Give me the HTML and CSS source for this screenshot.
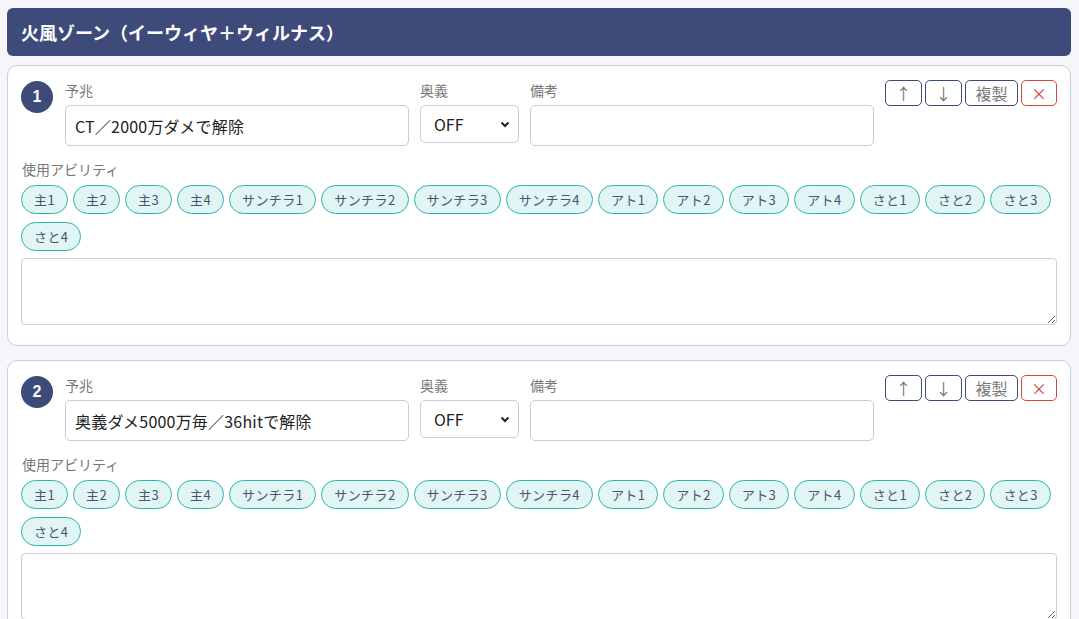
FILE: index.html
```html
<!DOCTYPE html>
<html lang="ja">
  <head>
    <meta charset="UTF-8" />
    <meta name="viewport" content="width=device-width, initial-scale=1.0" />
    <title>火風ゾーン</title>
    <link rel="stylesheet" href="styles.css">
  </head>
  <body>
    <!-- ゾーン見出し -->
    <header class="zone-head">
      <h2>火風ゾーン（イーウィヤ＋ウィルナス）</h2>
    </header>

    <!-- 予兆カード 1 -->
    <section class="omen-card">
      <div class="omen-top">
        <div class="omen-no">1</div>
        <div class="field field-text">
          <label>予兆</label>
          <input type="text" value="CT／2000万ダメで解除">
        </div>
        <div class="field field-select">
          <label>奥義</label>
          <select><option>OFF</option><option>ON</option></select>
        </div>
        <div class="field field-text">
          <label>備考</label>
          <input type="text" value="">
        </div>
        <div class="omen-btns">
          <button class="btn">↑</button>
          <button class="btn">↓</button>
          <button class="btn btn-copy">複製</button>
          <button class="btn btn-del">×</button>
        </div>
      </div>
      <div class="ability-label">使用アビリティ</div>
      <div class="chips">
        <span class="chip">主1</span>
        <span class="chip">主2</span>
        <span class="chip">主3</span>
        <span class="chip">主4</span>
        <span class="chip">サンチラ1</span>
        <span class="chip">サンチラ2</span>
        <span class="chip">サンチラ3</span>
        <span class="chip">サンチラ4</span>
        <span class="chip">アト1</span>
        <span class="chip">アト2</span>
        <span class="chip">アト3</span>
        <span class="chip">アト4</span>
        <span class="chip">さと1</span>
        <span class="chip">さと2</span>
        <span class="chip">さと3</span>
        <span class="chip">さと4</span>
      </div>
      <textarea class="memo"></textarea>
    </section>

    <!-- 予兆カード 2 -->
    <section class="omen-card">
      <div class="omen-top">
        <div class="omen-no">2</div>
        <div class="field field-text">
          <label>予兆</label>
          <input type="text" value="奥義ダメ5000万毎／36hitで解除">
        </div>
        <div class="field field-select">
          <label>奥義</label>
          <select><option>OFF</option><option>ON</option></select>
        </div>
        <div class="field field-text">
          <label>備考</label>
          <input type="text" value="">
        </div>
        <div class="omen-btns">
          <button class="btn">↑</button>
          <button class="btn">↓</button>
          <button class="btn btn-copy">複製</button>
          <button class="btn btn-del">×</button>
        </div>
      </div>
      <div class="ability-label">使用アビリティ</div>
      <div class="chips">
        <span class="chip">主1</span>
        <span class="chip">主2</span>
        <span class="chip">主3</span>
        <span class="chip">主4</span>
        <span class="chip">サンチラ1</span>
        <span class="chip">サンチラ2</span>
        <span class="chip">サンチラ3</span>
        <span class="chip">サンチラ4</span>
        <span class="chip">アト1</span>
        <span class="chip">アト2</span>
        <span class="chip">アト3</span>
        <span class="chip">アト4</span>
        <span class="chip">さと1</span>
        <span class="chip">さと2</span>
        <span class="chip">さと3</span>
        <span class="chip">さと4</span>
      </div>
      <textarea class="memo"></textarea>
    </section>
  </body>
</html>
```

FILE: styles.css
```css
body {
  margin: 0;
  padding: 8px 8px 0 7px;
  background-color: #f5f6fa;
  font-family: "Noto Sans CJK JP", "Noto Sans", sans-serif;
  color: #333;
}

.zone-head {
  background-color: #3d4a7a;
  border-radius: 6px;
  height: 48px;
  padding: 0 14px;
  display: flex;
  align-items: center;
}

.zone-head h2 {
  margin: 0;
  color: #fff;
  font-size: 18px;
  font-weight: 700;
}

.omen-card {
  background-color: #fff;
  border: 1px solid #c9ccdb;
  border-radius: 10px;
  margin-top: 9px;
  padding: 14px 13px 20px 13px;
}

.omen-card + .omen-card {
  margin-top: 14px;
}

.omen-top {
  display: flex;
  align-items: flex-start;
}

.omen-no {
  width: 32px;
  height: 32px;
  margin-top: 1px;
  margin-right: 12px;
  border-radius: 50%;
  background-color: #3d4a7a;
  color: #fff;
  font-family: "Liberation Sans", Arial, sans-serif;
  font-weight: 700;
  font-size: 16px;
  display: flex;
  align-items: center;
  justify-content: center;
  flex-shrink: 0;
}

.field {
  display: flex;
  flex-direction: column;
  flex-shrink: 0;
  margin-right: 11px;
}

.field label {
  font-size: 14px;
  line-height: 20px;
  color: #777;
  margin-bottom: 5px;
}

.field-text {
  width: 344px;
}

.field-select {
  width: 99px;
}

.field input,
.field select {
  font-family: inherit;
  font-size: 16px;
  color: #222;
  border: 1px solid #c9ccdb;
  border-radius: 5px;
  background-color: #fff;
  box-sizing: border-box;
  outline: none;
}

.field input {
  height: 41px;
  padding: 0 9px;
  letter-spacing: 0.2px;
}

.field select {
  height: 38px;
  padding: 0 13px;
  appearance: none;
  background-image: url("data:image/svg+xml,%3Csvg xmlns='http://www.w3.org/2000/svg' width='10' height='7' viewBox='0 0 10 7'%3E%3Cpath d='M1.5 1.5 5 5l3.5-3.5' fill='none' stroke='%23222' stroke-width='2'/%3E%3C/svg%3E");
  background-repeat: no-repeat;
  background-position: right 8px center;
}

.omen-btns {
  display: flex;
  gap: 3px;
  margin-left: auto;
  flex-shrink: 0;
}

.btn {
  height: 26px;
  min-width: 37px;
  padding: 0 8px;
  border: 1px solid #3d4a7a;
  border-radius: 5px;
  background-color: #fff;
  color: #777;
  font-family: "Noto Sans CJK JP", sans-serif;
  font-size: 16px;
  line-height: 1;
  white-space: nowrap;
}

.btn-copy {
  min-width: 53px;
}

.btn-del {
  min-width: 36px;
  border-color: #d0473c;
  color: #d0473c;
}

.ability-label {
  font-size: 14px;
  line-height: 20px;
  color: #777;
  margin-top: 13px;
  margin-left: 1px;
}

.chips {
  display: flex;
  flex-wrap: wrap;
  gap: 8px 5px;
  margin-top: 6px;
}

.chip {
  display: inline-flex;
  align-items: center;
  height: 29px;
  box-sizing: border-box;
  padding: 0 12px;
  border: 1px solid #2bb5a8;
  border-radius: 15px;
  background-color: #e1f6f4;
  color: #4a5375;
  font-size: 13px;
  letter-spacing: 0.4px;
}

.memo {
  display: block;
  width: 100%;
  height: 67px;
  box-sizing: border-box;
  margin-top: 7px;
  border: 1px solid #c9ccdb;
  border-radius: 4px;
  font-family: inherit;
  font-size: 14px;
}
```
